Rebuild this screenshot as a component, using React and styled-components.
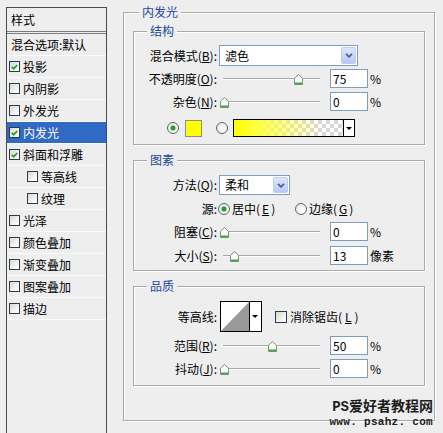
import React from 'react';
import styled, { createGlobalStyle } from 'styled-components';

const Global = createGlobalStyle`
  html, body { margin: 0; padding: 0; background: #eeeeee; }
  body {
    font-family: "Noto Sans CJK SC", "Noto Sans", sans-serif;
    font-size: 12px;
    line-height: 14px;
    color: #000;
  }
  #root { width: 443px; height: 433px; overflow: hidden; }
  u { text-decoration: underline; text-underline-offset: 1px; }
`;

const Page = styled.div`
  position: relative;
  width: 443px;
  height: 433px;
  box-sizing: border-box;
  padding: 7px 0 0 6px;
  display: flex;
  align-items: flex-start;
  gap: 16px;
  overflow: hidden;
`;

/* ---------- left style list ---------- */
const StylePanel = styled.div`
  flex-shrink: 0;
  width: 101px;
  height: 440px;
  box-sizing: border-box;
  border: 1px solid #4a4a4a;
  background: #eeeeee;
  display: flex;
  flex-direction: column;
`;

const PanelHeader = styled.div`
  height: 26px;
  box-sizing: border-box;
  border-bottom: 3px double #7c7c7c;
  display: flex;
  align-items: center;
  padding-left: 4px;
`;

const ListRow = styled.div`
  height: 22px;
  box-sizing: border-box;
  border-bottom: 1px solid #fbfbfb;
  display: flex;
  align-items: center;
  gap: 3px;
  padding-left: ${(p) => p.$indent}px;
  background: ${(p) => (p.$selected ? '#316ac5' : 'transparent')};
  color: ${(p) => (p.$selected ? '#fff' : '#000')};
  white-space: nowrap;
`;

const CheckBox = styled.span`
  flex-shrink: 0;
  width: ${(p) => p.$size}px;
  height: ${(p) => p.$size}px;
  box-sizing: border-box;
  border: 1px solid #2a3c52;
  background: linear-gradient(135deg, #d9d9d2 0%, #f3f3ef 60%, #ffffff 100%);
  display: inline-flex;
  align-items: center;
  justify-content: center;
`;

const Check = ({ on, size = 11 }) => (
  <CheckBox $size={size}>
    {on && (
      <svg width="7" height="6" viewBox="0 0 7 6">
        <path d="M0.8 2.8 L2.7 4.7 L6.2 1" fill="none" stroke="#21a121" strokeWidth="1.8" />
      </svg>
    )}
  </CheckBox>
);

/* ---------- right settings ---------- */
const OuterGroup = styled.div`
  position: relative;
  flex-shrink: 0;
  margin-top: 5px;
  width: 312px;
  height: 409px;
  box-sizing: border-box;
  border: 1px solid #a9a9a9;
  box-shadow: inset 1px 1px 0 #fff, 1px 1px 0 #fff;
  padding: 18px 0 0 9px;
  display: flex;
  flex-direction: column;
  gap: 15px;
`;

const Group = styled.div`
  position: relative;
  flex-shrink: 0;
  width: 292px;
  height: ${(p) => p.$h}px;
  box-sizing: border-box;
  border: 1px solid #a9a9a9;
  box-shadow: inset 1px 1px 0 #fff, 1px 1px 0 #fff;
  padding-top: ${(p) => p.$pt}px;
  display: flex;
  flex-direction: column;
`;

const GroupTitle = styled.span`
  position: absolute;
  top: -8px;
  left: ${(p) => p.$left}px;
  padding: 0 3px;
  background: #eeeeee;
  color: #1f48a0;
  line-height: 14px;
  white-space: nowrap;
`;

const Row = styled.div`
  flex-shrink: 0;
  display: flex;
  align-items: center;
  height: ${(p) => p.$h}px;
  margin-top: ${(p) => p.$mt}px;
  white-space: nowrap;
`;

const Label = styled.span`
  flex-shrink: 0;
  width: 83px;
  text-align: right;
`;

const SelectBox = styled.div`
  width: ${(p) => p.$w}px;
  height: ${(p) => p.$h}px;
  margin-left: 2px;
  box-sizing: border-box;
  border: 1px solid #7f9db9;
  background: #fff;
  display: flex;
  align-items: stretch;
  padding: 1px 1px 1px 5px;
`;

const SelectText = styled.span`
  flex: 1;
  display: flex;
  align-items: center;
`;

const DropButton = styled.span`
  width: 15px;
  box-sizing: border-box;
  border: 1px solid #bccdf5;
  border-radius: 2px;
  background: linear-gradient(#dde6fd, #b7c9f6);
  display: flex;
  align-items: center;
  justify-content: center;
`;

const Select = ({ w, h, value }) => (
  <SelectBox $w={w} $h={h}>
    <SelectText>{value}</SelectText>
    <DropButton>
      <svg width="8" height="5" viewBox="0 0 8 5">
        <path d="M1 0.8 L4 3.8 L7 0.8" fill="none" stroke="#4d6185" strokeWidth="1.8" />
      </svg>
    </DropButton>
  </SelectBox>
);

const SliderBox = styled.div`
  position: relative;
  flex-shrink: 0;
  width: 97px;
  height: 100%;
  margin-left: 6px;
  display: flex;
  align-items: center;
`;

const Track = styled.div`
  width: 100%;
  height: 1px;
  background: #a8a8a8;
  border-bottom: 1px solid #ffffff;
`;

const Thumb = styled.svg`
  position: absolute;
  top: 50%;
  margin-top: -5px;
`;

const Slider = ({ pos }) => (
  <SliderBox>
    <Track />
    <Thumb width="9" height="11" viewBox="0 0 9 11" style={{ left: pos - 4.5 }}>
      <path d="M4.5 0.5 L8.5 4.3 V10.5 H0.5 V4.3 Z" fill="#fbfbfb" stroke="#7d8f7d" />
      <path d="M1 9.3 H8" stroke="#42a842" strokeWidth="1.6" />
    </Thumb>
  </SliderBox>
);

const NumInput = styled.div`
  flex-shrink: 0;
  width: 38px;
  height: 19px;
  margin-left: 10px;
  box-sizing: border-box;
  border: 1px solid #7f9db9;
  background: #fff;
  padding-left: 2px;
  display: flex;
  align-items: center;
`;

const Unit = styled.span`
  margin-left: 2px;
`;

const RadioDot = styled.span`
  flex-shrink: 0;
  width: 12px;
  height: 12px;
  margin-left: ${(p) => p.$ml || 0}px;
  box-sizing: border-box;
  border-radius: 50%;
  border: 1px solid #55667c;
  background: radial-gradient(circle at 65% 65%, #ffffff 0%, #e2e2dc 100%);
  display: inline-flex;
  align-items: center;
  justify-content: center;
  &::after {
    content: '';
    display: ${(p) => (p.$on ? 'block' : 'none')};
    width: 4px;
    height: 4px;
    border-radius: 50%;
    background: #2ba42b;
    box-shadow: 0 0 0 0.5px #1d7a1d;
  }
`;

const SourceOptions = styled.div`
  margin-left: 1px;
  display: grid;
  grid-template-columns: 77px auto;
  align-items: center;
`;

const RadioOption = styled.span`
  display: inline-flex;
  align-items: center;
  gap: 2px;
`;

const Swatch = styled.span`
  flex-shrink: 0;
  width: 17px;
  height: 17px;
  margin-left: 6px;
  box-sizing: border-box;
  border: 1px solid #8c8c8c;
  background: #ffff00;
`;

const GradientPicker = styled.div`
  flex-shrink: 0;
  width: 122px;
  height: 18px;
  margin-left: 5px;
  box-sizing: border-box;
  border: 1px solid #000;
  display: flex;
`;

const GradientFill = styled.span`
  flex: 1;
  background:
    linear-gradient(90deg, #ffff00 0%, #ffff40 20%, rgba(255, 255, 80, 0) 80%),
    repeating-conic-gradient(#d6d6d6 0 25%, #ffffff 0 50%) 0 0 / 8px 8px;
`;

const SmallArrow = styled.span`
  width: 11px;
  box-sizing: border-box;
  border-left: 1px solid #000;
  background: #fff;
  display: flex;
  align-items: center;
  justify-content: center;
  &::after {
    content: '';
    border-left: 3px solid transparent;
    border-right: 3px solid transparent;
    border-top: 3px solid #000;
  }
`;

const ContourPicker = styled.div`
  flex-shrink: 0;
  width: 42px;
  height: 31px;
  margin-left: 3px;
  box-sizing: border-box;
  border: 1px solid #000;
  display: flex;
  background: #fff;
`;

const ContourPreview = styled.svg`
  display: block;
`;

const AntiAlias = styled.span`
  margin-left: 13px;
  display: inline-flex;
  align-items: center;
  gap: 3px;
`;

const Watermark = styled.div`
  position: absolute;
  right: 10px;
  top: 399px;
  color: #1c1c1c;
  font-weight: bold;
  white-space: nowrap;
  display: flex;
  flex-direction: column;
  align-items: flex-end;
`;

const WaterTitle = styled.div`
  font-family: "Liberation Mono", "Noto Sans CJK SC", monospace;
  font-size: 14px;
  line-height: 17px;
`;

const WaterUrl = styled.div`
  font-family: "Liberation Mono", monospace;
  font-size: 11px;
  line-height: 13px;
  letter-spacing: 0.3px;
`;

const styleItems = [
  { t: '投影', on: true },
  { t: '内阴影', on: false },
  { t: '外发光', on: false },
  { t: '内发光', on: true, sel: true },
  { t: '斜面和浮雕', on: true },
  { t: '等高线', on: false, sub: true },
  { t: '纹理', on: false, sub: true },
  { t: '光泽', on: false },
  { t: '颜色叠加', on: false },
  { t: '渐变叠加', on: false },
  { t: '图案叠加', on: false },
  { t: '描边', on: false },
];

const SliderRow = ({ mt, label, pos, value, unit }) => (
  <Row $mt={mt} $h={19}>
    <Label>{label}</Label>
    <Slider pos={pos} />
    <NumInput>{value}</NumInput>
    <Unit>{unit}</Unit>
  </Row>
);

export default function App() {
  return (
    <>
      <Global />
      <Page>
        <StylePanel>
          <PanelHeader>样式</PanelHeader>
          <ListRow $indent={4}>混合选项:默认</ListRow>
          {styleItems.map((it) => (
            <ListRow key={it.t} $indent={it.sub ? 20 : 2} $selected={it.sel}>
              <Check on={it.on} />
              {it.t}
            </ListRow>
          ))}
        </StylePanel>

        <OuterGroup>
          <GroupTitle $left={15}>内发光</GroupTitle>

          <Group $h={114} $pt={13}>
            <GroupTitle $left={13}>结构</GroupTitle>
            <Row $mt={0} $h={21}>
              <Label>混合模式(<u>B</u>):</Label>
              <Select w={139} h={21} value="滤色" />
            </Row>
            <SliderRow mt={3} label={<>不透明度(<u>O</u>):</>} pos={75} value="75" unit="%" />
            <SliderRow mt={4} label={<>杂色(<u>N</u>):</>} pos={1} value="0" unit="%" />
            <Row $mt={8} $h={18}>
              <RadioDot $on $ml={33} />
              <Swatch />
              <RadioDot $ml={14} />
              <GradientPicker>
                <GradientFill />
                <SmallArrow />
              </GradientPicker>
            </Row>
          </Group>

          <Group $h={111} $pt={14}>
            <GroupTitle $left={13}>图素</GroupTitle>
            <Row $mt={0} $h={20}>
              <Label>方法(<u>Q</u>):</Label>
              <Select w={71} h={20} value="柔和" />
            </Row>
            <Row $mt={1} $h={26}>
              <Label>源:</Label>
              <SourceOptions>
                <RadioOption>
                  <RadioDot $on />
                  居中(<u>E</u>)
                </RadioOption>
                <RadioOption>
                  <RadioDot />
                  边缘(<u>G</u>)
                </RadioOption>
              </SourceOptions>
            </Row>
            <SliderRow mt={0} label={<>阻塞(<u>C</u>):</>} pos={1} value="0" unit="%" />
            <SliderRow mt={5} label={<>大小(<u>S</u>):</>} pos={11} value="13" unit="像素" />
          </Group>

          <Group $h={100} $pt={14}>
            <GroupTitle $left={13}>品质</GroupTitle>
            <Row $mt={0} $h={31}>
              <Label>等高线:</Label>
              <ContourPicker>
                <ContourPreview width="28" height="29" viewBox="0 0 28 29">
                  <rect x="0" y="0" width="28" height="29" fill="#ffffff" />
                  <path d="M0 29 L28 0 L28 29 Z" fill="#9a9a9a" />
                </ContourPreview>
                <SmallArrow />
              </ContourPicker>
              <AntiAlias>
                <Check on={false} size={12} />
                消除锯齿(<u>L</u>)
              </AntiAlias>
            </Row>
            <SliderRow mt={4} label={<>范围(<u>R</u>):</>} pos={49} value="50" unit="%" />
            <SliderRow mt={4} label={<>抖动(<u>J</u>):</>} pos={1} value="0" unit="%" />
          </Group>
        </OuterGroup>

        <Watermark>
          <WaterTitle>PS爱好者教程网</WaterTitle>
          <WaterUrl>www. psahz. com</WaterUrl>
        </Watermark>
      </Page>
    </>
  );
}
